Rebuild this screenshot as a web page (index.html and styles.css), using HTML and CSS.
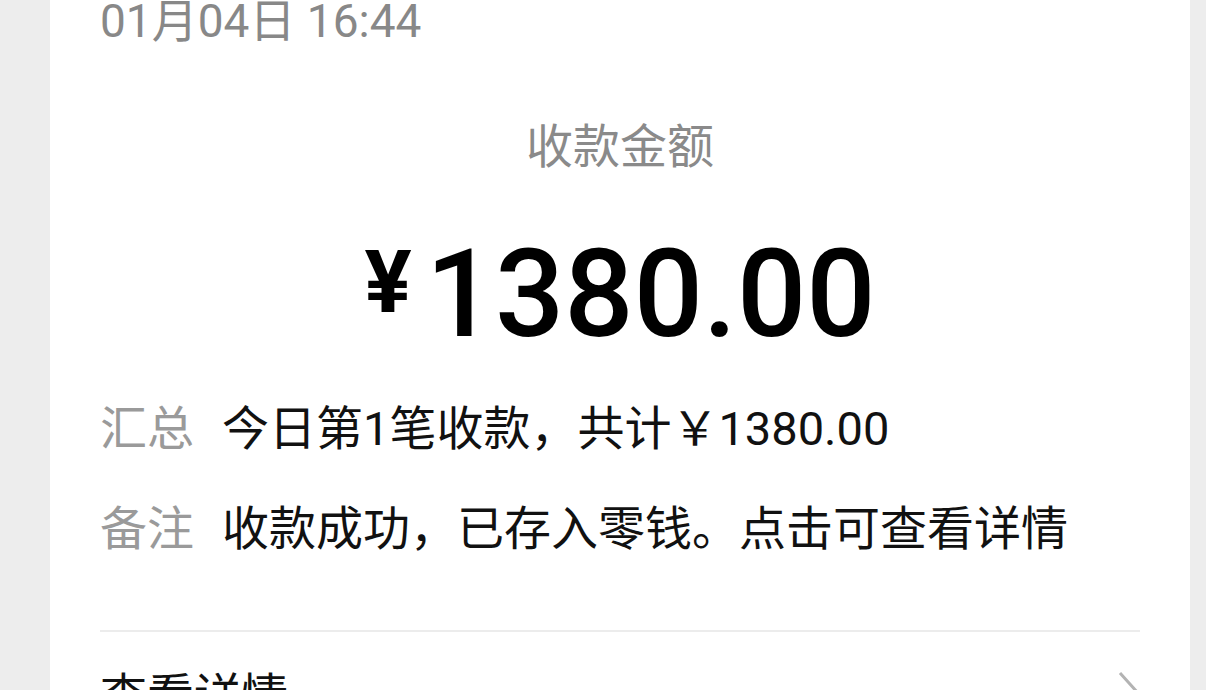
FILE: index.html
```html
<!DOCTYPE html>
<html lang="zh-CN">
<head>
<meta charset="utf-8">
<link rel="stylesheet" href="styles.css">
</head>
<body>
<div class="card">
  <div class="date">01月04日 16:44</div>
  <div class="title">收款金额</div>
  <div class="amount"><span class="yen">¥</span><span class="num">1380.00</span></div>
  <div class="rows">
    <div class="row"><span class="label">汇总</span><span class="value">今日第1笔收款，共计￥1380.00</span></div>
    <div class="row"><span class="label">备注</span><span class="value">收款成功，已存入零钱。点击可查看详情</span></div>
  </div>
  <div class="divider"></div>
  <div class="detail">
    <span class="detail-text">查看详情</span>
    <svg class="chev" width="22" height="44" viewBox="0 0 22 44"><path d="M2 2 L20 22 L2 42" fill="none" stroke="#b3b3b3" stroke-width="3"/></svg>
  </div>
</div>
</body>
</html>
```

FILE: styles.css
```css
html, body {
  margin: 0;
  padding: 0;
  background: #ededed;
  height: 100%;
  overflow: hidden;
}
body {
  font-family: Roboto, "Noto Sans CJK SC", sans-serif;
}
.card {
  margin: -5px 0 0 50px;
  width: 1140px;
  box-sizing: border-box;
  padding: 0 50px;
  background: #fff;
  height: 800px;
}
.date {
  font-size: 46px;
  line-height: 52px;
  color: #888;
}
.title {
  margin-top: 72px;
  text-align: center;
  font-size: 47px;
  line-height: 56px;
  color: #8a8a8a;
}
.amount {
  margin-top: 59px;
  text-align: center;
  color: #000;
  line-height: 122px;
  height: 122px;
}
.yen {
  font-size: 88px;
  line-height: 88px;
  font-weight: 700;
  margin-right: 14px;
  vertical-align: 24px;
}
.num {
  font-size: 122px;
  font-weight: 500;
}
.rows {
  margin-top: 23px;
}
.row {
  display: flex;
  font-size: 47px;
  line-height: 100px;
  height: 100px;
}
.label {
  color: #9a9a9a;
  width: 122px;
  flex-shrink: 0;
}
.value {
  color: #111;
}
.divider {
  margin-top: 51px;
  height: 2px;
  background: #ececec;
}
.detail {
  display: flex;
  justify-content: space-between;
  align-items: center;
  padding-top: 14px;
  height: 100px;
  line-height: 100px;
  font-size: 47px;
}
.detail-text {
  color: #111;
}
.chev {
  margin-bottom: 6px;
}
```
